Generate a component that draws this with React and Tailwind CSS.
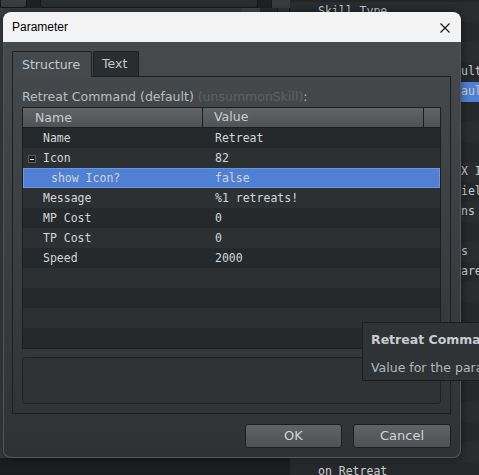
import React from "react";

const params = [
  { name: "Name", value: "Retreat" },
  { name: "Icon", value: "82", toggle: true },
  { name: "show Icon?", value: "false", child: true, selected: true },
  { name: "Message", value: "%1 retreats!" },
  { name: "MP Cost", value: "0" },
  { name: "TP Cost", value: "0" },
  { name: "Speed", value: "2000" },
];

// right-hand list of the editor behind the dialog
const sideRows = [
  { left: "Skill Type" },
  {},
  {},
  { right: "ult" },
  { right: "aul", selected: true },
  {},
  {},
  {},
  { right: "X I" },
  { right: "iel" },
  { right: "ns" },
  {},
  { right: "s" },
  { right: "are" },
  {},
  {},
  {},
  {},
  {},
  {},
  {},
  {},
  {},
  { left: "on Retreat" },
];

const sans = "font-['DejaVu_Sans',sans-serif]";
const mono = "font-['DejaVu_Sans_Mono',monospace]";

function Background() {
  return (
    <div className="flex h-full w-full">
      <div className="flex w-[290px] flex-col">
        <div className="flex h-[8px] gap-[13px]">
          <div className="w-[27px] rounded-b-[3px] border border-t-0 border-[#16181a] bg-[#3a3d40]" />
          <div className="w-[218px] rounded-b-[3px] border border-t-0 border-[#16181a] bg-[#2a2d30]" />
          <div className="flex-1 border-l border-[#17191b] bg-[#3a3d40]" />
        </div>
        <div className="flex flex-1">
          <div className="w-[242px] bg-[#3a3d40]" />
          <div className="w-[18px] bg-[#45484b]" />
          <div className="w-[18px] border-r border-[#17191b] bg-[#2b2d30]" />
          <div className="w-[12px] border-r border-[#17191b] bg-[#2f3235]" />
        </div>
        <div className="h-[17px] bg-[#1c1d1f]" />
      </div>
      <div className={`flex flex-1 flex-col bg-[#232528] pt-[2px] text-[11.5px] text-[#c8ccd0] ${mono}`}>
        {sideRows.map((r, i) => (
          <div
            key={i}
            className={`flex h-[20px] shrink-0 items-center overflow-hidden ${
              r.selected ? "bg-[#4f80d4]" : i % 2 ? "bg-[#26292c]" : "bg-[#2a2d30]"
            }`}
          >
            <div className="w-[171px] shrink-0 pl-[28px]">{r.left}</div>
            <div className="flex-1 overflow-hidden whitespace-nowrap">{r.right}</div>
          </div>
        ))}
      </div>
    </div>
  );
}

function Row({ p, i }) {
  const bg = p.selected
    ? "bg-[#4f80d4] outline outline-1 -outline-offset-1 outline-[#6b97e0]"
    : i % 2
    ? "bg-[#2d3033]"
    : "bg-[#26292c]";
  return (
    <div className={`flex h-[20px] items-center pt-[2px] text-[11.5px] text-[#d2d6d9] ${mono} ${bg}`}>
      <div className={`relative w-[180px] ${p.child ? "pl-[28px]" : "pl-[20px]"}`}>
        {p.toggle && (
          <span className="absolute left-[5px] top-1/2 flex h-[8px] w-[8px] -translate-y-1/2 items-center justify-center border border-[#5b5e61] bg-[#1c1e20]">
            <span className="h-px w-[4px] bg-[#e0e3e6]" />
          </span>
        )}
        {p.name}
      </div>
      <div className="flex-1 pl-[12px]">{p.value}</div>
    </div>
  );
}

function ParamTable() {
  const empty = Array.from({ length: 4 });
  return (
    <div className="border border-[#1b1d1f]">
      <div className={`flex h-[20px] items-center border-b border-[#1b1d1f] bg-gradient-to-b from-[#606467] to-[#4f5356] text-[12.5px] text-[#c9cdd0] ${sans}`}>
        <div className="w-[180px] border-r border-[#1b1d1f] pl-[12px] leading-[19px]">Name</div>
        <div className="flex-1 pl-[11px]">Value</div>
        <div className="h-full w-[17px] border-l border-[#1b1d1f]" />
      </div>
      {params.map((p, i) => (
        <Row key={p.name} p={p} i={i} />
      ))}
      {empty.map((_, j) => (
        <div
          key={j}
          className={`h-[20px] ${(params.length + j) % 2 ? "bg-[#2d3033]" : "bg-[#26292c]"}`}
        />
      ))}
    </div>
  );
}

function Dialog() {
  return (
    <div className="absolute left-[3px] top-[12px] flex w-[458px] flex-col rounded-[8px] shadow-[0_0_10px_rgba(0,0,0,0.5)]">
      <div className="flex h-[30px] items-center justify-between rounded-t-[8px] bg-[#f3f3f3] pl-[9px] pr-[11px]">
        <span className="font-['Liberation_Sans',sans-serif] text-[12px] text-black">Parameter</span>
        <svg width="10" height="10" viewBox="0 0 10 10" className="mt-[1px]">
          <path d="M0.5 0.5L9.5 9.5M9.5 0.5L0.5 9.5" stroke="#111" strokeWidth="1.1" />
        </svg>
      </div>
      <div className="flex flex-col rounded-b-[8px] border border-t-0 border-[#55585b] bg-gradient-to-b from-[#474a4d] to-[#2f3235] pb-[9px] pl-[8px] pr-[9px] pt-[9px]">
        <div className={`flex h-[25px] gap-px text-[12.5px] ${sans}`}>
          <div className="relative z-10 -mb-px flex w-[80px] items-center rounded-t-[2px] border border-b-0 border-[#1c1e20] bg-[#46494c] pl-[9px] pt-[1px] text-[#c3c7ca]">
            Structure
          </div>
          <div className="flex w-[46px] items-center rounded-t-[2px] border border-b-0 border-[#1c1e20] bg-[#2a2d30] pl-[8px] pt-[1px] text-[#c3c7ca]">
            Text
          </div>
        </div>
        <div className={`flex h-[338px] flex-col border border-[#1c1e20] px-[9px] pt-[12px] ${sans}`}>
          <div className="mb-[2px] h-[16px] text-[12.5px] leading-[16px] text-[#b9bdc0]">
            Retreat Command (default) <span className="text-[#5d6165]">(unsummonSkill)</span>:
          </div>
          <ParamTable />
          <div className="mt-[8px] h-[47px] rounded-[3px] border border-[#1f2123] bg-[#303336]" />
        </div>
        <div className={`mt-[10px] flex justify-end gap-[11px] text-[13px] text-[#d0d4d7] ${sans}`}>
          <button className="h-[24px] w-[97px] rounded-[3px] border border-[#1b1d1f] bg-gradient-to-b from-[#5f6366] to-[#4e5255]">
            OK
          </button>
          <button className="h-[24px] w-[98px] rounded-[3px] border border-[#1b1d1f] bg-gradient-to-b from-[#5f6366] to-[#4e5255]">
            Cancel
          </button>
        </div>
      </div>
    </div>
  );
}

function Tooltip() {
  return (
    <div className={`absolute left-[362px] top-[322px] h-[59px] w-[200px] rounded-[2px] border border-[#1b1d1f] bg-[#303336] pl-[8px] pt-[8px] text-[12.5px] ${sans}`}>
      <div className="whitespace-nowrap font-bold text-[#c8ccd0]">Retreat Command (default)</div>
      <div className="mt-[9px] whitespace-nowrap text-[#b3b7ba]">Value for the parameter.</div>
    </div>
  );
}

export default function App() {
  return (
    <div className="relative h-[475px] w-[479px] overflow-hidden bg-[#1e2022]">
      <Background />
      <Dialog />
      <Tooltip />
    </div>
  );
}
